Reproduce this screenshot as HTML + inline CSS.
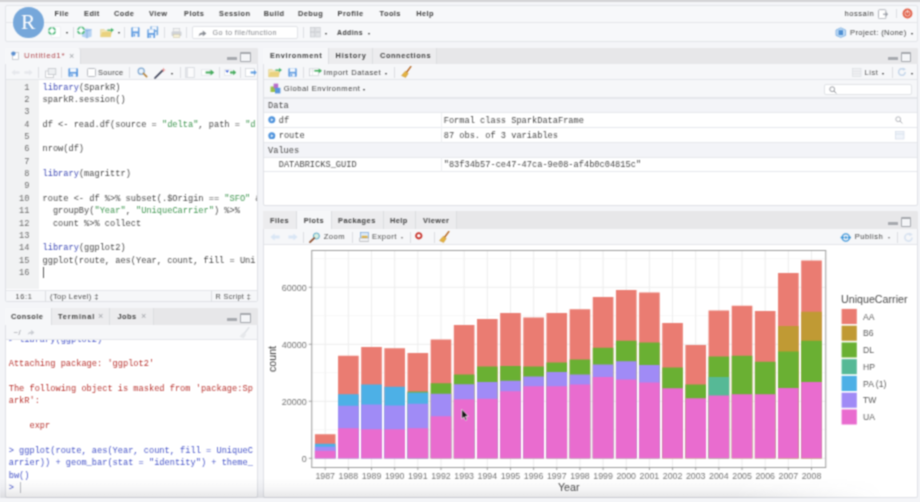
<!DOCTYPE html>
<html lang="en"><head><meta charset="utf-8"><title>RStudio</title>
<style>
html,body{margin:0;padding:0}
body{width:920px;height:502px;overflow:hidden;position:relative;background:#f4f5f8;font-family:"Liberation Sans",sans-serif;font-size:8.4px;color:#3a3a3a}
div,span,svg{position:absolute;box-sizing:border-box}
#app{left:-12px;top:-12px;width:944px;height:526px;background:#f4f5f8;filter:url(#soft)}
#stage{left:12px;top:12px;width:920px;height:502px}
.topstrip{left:-6px;top:-6px;width:932px;height:8.4px;background:#d4d4d6}
.hdr{left:4.5px;top:5px;width:913px;height:36.5px;background:#f7f8fa;border:1px solid #e3e5e9;border-radius:2px}
.hline{left:5px;top:22px;width:912px;height:1px;background:#e5e6ea}
.logo{left:12.8px;top:7.1px;width:30.8px;height:30.8px;border-radius:50%;background:#76a7da}
.logo span{left:0;top:0;width:30.8px;height:30.8px;line-height:30.4px;text-align:center;color:#fff;font-family:"Liberation Serif","DejaVu Serif",serif;font-size:21.5px}
.pane{background:#fff;border:1px solid #dfe1e6;border-radius:2px;overflow:hidden}
.tabbar{background:#e7e7e9}
.tab{background:#ececee;border-right:1px solid #dcdde0}
.tab.on{background:#f6f7f9}
.tbar{background:#f6f7f9;border-bottom:1px solid #e4e6ea;left:0;right:0}
.t{white-space:nowrap;line-height:12px;height:12px;font-size:7.6px;letter-spacing:.5px}
.t span{position:static}
.b{font-weight:bold;font-size:7.4px;letter-spacing:.45px;color:#404040}
.g{color:#4c4c4c}
.m{font-family:"Liberation Mono","DejaVu Sans Mono",monospace;font-size:8.67px;color:#474747;white-space:pre;margin-top:.7px;letter-spacing:0}
.sep{width:1px;height:11px;background:#dcdee2}
.arr{width:0;height:0;border-left:1.8px solid transparent;border-right:1.8px solid transparent;border-top:2.4px solid #333}
.code .kw{color:#3d49b5}
.code .st{color:#3f9650}
.ln{color:#6b6b6b;text-align:right;width:24px}
.red{color:#b8332f}
.blue{color:#4553c8}
.shade{left:0;top:478px;width:920px;height:20px;background:linear-gradient(to bottom,rgba(60,60,70,0) 0%,rgba(60,60,70,0.04) 50%,rgba(60,60,70,0.13) 100%);-webkit-mask-image:linear-gradient(to right,#000 0%,#000 80%,transparent 96%);mask-image:linear-gradient(to right,#000 0%,#000 80%,transparent 96%);pointer-events:none}
.srch{background:#fff;border:1px solid #e1e3e7;border-radius:2px}
.row{left:0;right:0;border-bottom:1px solid #e6e8ec}
.hrow{background:#f3f4f8}

</style></head>
<body>
<svg width="0" height="0" style="position:absolute"><defs><filter id="soft" x="0" y="0" width="100%" height="100%" color-interpolation-filters="sRGB"><feConvolveMatrix order="3" kernelMatrix="0.169 0.411 0.169 0.411 1 0.411 0.169 0.411 0.169" divisor="3.32" edgeMode="duplicate" preserveAlpha="true"/></filter></defs></svg>
<div id="app"><div id="stage">
<div class="topstrip"></div>
<div class="hdr"></div><div class="hline"></div>
<div class="logo"><span>R</span></div>
<span class="t b" style="left:54.5px;top:7.90px;">File</span>
<span class="t b" style="left:84px;top:7.90px;">Edit</span>
<span class="t b" style="left:114px;top:7.90px;">Code</span>
<span class="t b" style="left:149px;top:7.90px;">View</span>
<span class="t b" style="left:184px;top:7.90px;">Plots</span>
<span class="t b" style="left:219px;top:7.90px;">Session</span>
<span class="t b" style="left:263.7px;top:7.90px;">Build</span>
<span class="t b" style="left:298px;top:7.90px;">Debug</span>
<span class="t b" style="left:337.5px;top:7.90px;">Profile</span>
<span class="t b" style="left:379.5px;top:7.90px;">Tools</span>
<span class="t b" style="left:416.2px;top:7.90px;">Help</span>
<span class="t " style="left:844.5px;top:7.80px;">hossain</span>
<svg style="left:877.5px;top:8.6px" width="12" height="10.5" viewBox="0 0 12 10.5"><rect x="0.5" y="0.7" width="7.4" height="9" rx="1" fill="#fff" stroke="#a9adb4" stroke-width="0.9"/><path d="M5 5.2 L9.2 5.2 M7.6 3.4 L9.6 5.2 L7.6 7" stroke="#8a8f98" fill="none"/></svg>
<div class="sep" style="left:896px;top:9.30px;height:9px"></div>
<svg style="left:902px;top:8.3px" width="11" height="11" viewBox="0 0 11 11"><circle cx="5.5" cy="5.5" r="4.9" fill="#e2624b"/><circle cx="5.5" cy="5.5" r="2.6" fill="none" stroke="#f6d3cb" stroke-width="1"/><path d="M5.5 2 L5.5 5.4" stroke="#f6d3cb" stroke-width="1.1"/></svg>
<svg style="left:47px;top:26.0px" width="14" height="12" viewBox="0 0 14 12"><rect x="4.2" y="0.8" width="9" height="10.4" fill="#fff" stroke="#e3e5e9" stroke-width="0.5"/><circle cx="5" cy="4.9" r="3.1" fill="#fff" stroke="#4fb87a" stroke-width="1.5"/><path d="M5 1 V8.8 M1.1 4.9 H8.9" stroke="#fff" stroke-width="1"/></svg>
<div class="arr" style="left:65.50px;top:32.40px;border-top-color:#333"></div>
<div class="sep" style="left:72.5px;top:27.10px;height:11px"></div>
<svg style="left:76px;top:26.0px" width="17" height="13" viewBox="0 0 17 13"><path d="M6 3.4 L11 2.4 L15.6 3.6 L15.6 10.6 L11 12.2 L6 10.6 Z" fill="#a9cbf0" opacity="0.85"/><path d="M11 4.6 L11 12.2 M6 3.4 L11 4.6 L15.6 3.6" stroke="#6c9fdc" stroke-width="0.6" fill="none"/><circle cx="5" cy="4.4" r="3.1" fill="#fff" stroke="#4fb87a" stroke-width="1.5"/><path d="M5 0.5 V8.3 M1.1 4.4 H8.9" stroke="#fff" stroke-width="1"/></svg>
<svg style="left:100px;top:27.1px" width="15" height="11" viewBox="0 0 15 11"><path d="M0.6 2.6 L0.6 9.8 L10.6 9.8 L10.6 3.8 L5.2 3.8 L4.2 2.6 Z" fill="#f3e7b4" stroke="#dcc77c" stroke-width="0.5"/><path d="M0.6 9.8 L2 5 L11.8 5 L10.6 9.8 Z" fill="#ead27e"/><path d="M7.4 2.4 L11 2.4 L11 1 L14 3.1 L11 5.2 L11 3.8 L7.4 3.8 Z" fill="#46b36b"/></svg>
<div class="arr" style="left:117.50px;top:32.40px;border-top-color:#333"></div>
<div class="sep" style="left:124px;top:27.10px;height:11px"></div>
<svg style="left:131.2px;top:27.400000000000002px" width="8.8" height="10.4" viewBox="0 0 10 11.2" preserveAspectRatio="none"><rect x="0.4" y="0.4" width="9.2" height="10.4" rx="0.9" fill="#5f9be0"/><rect x="2" y="0.4" width="6" height="4.4" fill="#f4f8fd"/><rect x="2.4" y="6.8" width="5.2" height="4" fill="#eef4fc"/><rect x="3" y="7.6" width="1.6" height="2.6" fill="#5f9be0"/></svg>
<svg style="left:150px;top:26.44px" width="8.5" height="9.520000000000001" viewBox="0 0 10 11.2" preserveAspectRatio="none"><rect x="0.4" y="0.4" width="9.2" height="10.4" rx="0.9" fill="#7aabde"/><rect x="2" y="0.4" width="6" height="4.4" fill="#f4f8fd"/><rect x="2.4" y="6.8" width="5.2" height="4" fill="#eef4fc"/><rect x="3" y="7.6" width="1.6" height="2.6" fill="#7aabde"/></svg>
<svg style="left:146.5px;top:28.639999999999997px" width="8.5" height="9.520000000000001" viewBox="0 0 10 11.2" preserveAspectRatio="none"><rect x="0.4" y="0.4" width="9.2" height="10.4" rx="0.9" fill="#5f9be0"/><rect x="2" y="0.4" width="6" height="4.4" fill="#f4f8fd"/><rect x="2.4" y="6.8" width="5.2" height="4" fill="#eef4fc"/><rect x="3" y="7.6" width="1.6" height="2.6" fill="#5f9be0"/></svg>
<div class="sep" style="left:164px;top:27.10px;height:11px"></div>
<svg style="left:170.5px;top:27.6px" width="11" height="10" viewBox="0 0 11 10"><rect x="2.2" y="0.6" width="6.6" height="3.4" fill="#f3f3f3" stroke="#c6c8cc" stroke-width="0.6"/><rect x="0.5" y="3.6" width="10" height="4.4" rx="1" fill="#cfd2d7"/><rect x="2.2" y="6.4" width="6.6" height="3" fill="#f7f1d8" stroke="#c9c4a6" stroke-width="0.5"/></svg>
<div class="sep" style="left:186px;top:27.10px;height:11px"></div>
<div class="srch" style="left:192px;top:26px;width:105.5px;height:12.6px"></div>
<svg style="left:198px;top:28.6px" width="9" height="8" viewBox="0 0 9 8"><path d="M0.6 7.4 C1 4.6 2.6 3.6 4.8 3.6 L4.8 1.4 L8.4 4.4 L4.8 7.2 L4.8 5.4 C3 5.4 1.8 5.8 0.6 7.4 Z" fill="#8a8e95"/></svg>
<span class="t " style="left:212.5px;top:26.60px;color:#85878c;font-size:7.2px;letter-spacing:.45px">Go to file/function</span>
<div class="sep" style="left:303px;top:27.10px;height:11px"></div>
<svg style="left:310px;top:27.400000000000002px" width="10.6" height="10.4" viewBox="0 0 10.6 10.4"><rect x="0.4" y="0.4" width="4.4" height="4.4" fill="#e3e5e8" stroke="#c3c6cb" stroke-width="0.6"/><rect x="5.8" y="0.4" width="4.4" height="4.4" fill="#e3e5e8" stroke="#c3c6cb" stroke-width="0.6"/><rect x="0.4" y="5.6" width="4.4" height="4.4" fill="#e3e5e8" stroke="#c3c6cb" stroke-width="0.6"/><rect x="5.8" y="5.6" width="4.4" height="4.4" fill="#e3e5e8" stroke="#c3c6cb" stroke-width="0.6"/></svg>
<div class="arr" style="left:325.20px;top:32.60px;border-top-color:#333"></div>
<span class="t b" style="left:337px;top:26.90px;font-size:6.9px">Addins</span>
<div class="arr" style="left:368.20px;top:32.60px;border-top-color:#333"></div>
<svg style="left:835px;top:27.1px" width="11.5" height="11" viewBox="0 0 11.5 11"><path d="M1 3 L5.8 0.8 L10.6 3 L10.6 8.4 L5.8 10.4 L1 8.4 Z" fill="#bcd9f4" stroke="#6ea5dc" stroke-width="0.7"/><rect x="3.6" y="3.2" width="4.4" height="4.8" fill="#4f8fd3"/></svg>
<span class="t " style="left:850px;top:26.60px;color:#444;letter-spacing:.37px">Project: (None)</span>
<div class="arr" style="left:910.70px;top:32.60px;border-top-color:#333"></div>
<div class="pane" style="left:4.5px;top:47.5px;width:253.3px;height:254.8px"></div>
<div class="tabbar" style="left:4.5px;top:47.5px;width:253.3px;height:16.9px;border-radius:2px 2px 0 0"></div>
<div class="tab on" style="left:4.5px;top:47.5px;width:76px;height:16.9px;border-top-right-radius:3px"></div>
<svg style="left:10.5px;top:51px" width="8" height="9" viewBox="0 0 8 9"><rect x="1.4" y="1.4" width="6" height="7.2" fill="#fff" stroke="#b8bcc3" stroke-width="0.7"/><circle cx="2.4" cy="2.6" r="2.2" fill="#5b8fd0"/></svg>
<span class="t " style="left:24px;top:49.70px;color:#b04a4f;font-size:8px;letter-spacing:.65px">Untitled1*</span>
<span class="t " style="left:69px;top:49.50px;color:#a0a3a8;font-size:9px">×</span>
<div style="left:227px;top:57.10px;width:10px;height:2.7px;background:#a6a9ae;border-radius:.5px"></div>
<div style="left:240px;top:52.30px;width:10.6px;height:9.6px;border:1px solid #a6a9ae;border-top:2.6px solid #a6a9ae;background:#f4f5f7;border-radius:1px"></div>
<div class="tbar" style="left:5.5px;top:64.3px;width:251.3px;height:15.8px"></div>
<svg style="left:11px;top:69.0px" width="9" height="7" viewBox="0 0 9 7"><path d="M0.4 3.5 L4 0.4 L4 2.2 L8.6 2.2 L8.6 4.8 L4 4.8 L4 6.6 Z" fill="#e6e8ec"/></svg>
<svg style="left:24px;top:69.0px" width="9" height="7" viewBox="0 0 9 7"><path d="M8.6 3.5 L5 0.4 L5 2.2 L0.4 2.2 L0.4 4.8 L5 4.8 L5 6.6 Z" fill="#e6e8ec"/></svg>
<div class="sep" style="left:38px;top:67.00px;height:11px"></div>
<svg style="left:45px;top:67.5px" width="11.5" height="10" viewBox="0 0 11.5 10"><rect x="0.6" y="3" width="8" height="6.4" fill="#fff" stroke="#c2c5ca" stroke-width="0.8"/><rect x="3.2" y="0.6" width="7.6" height="6" fill="#eef0f2" stroke="#c2c5ca" stroke-width="0.8"/></svg>
<div class="sep" style="left:61px;top:67.00px;height:11px"></div>
<svg style="left:68.4px;top:67.9px" width="10.4" height="9.2" viewBox="0 0 10 11.2" preserveAspectRatio="none"><rect x="0.4" y="0.4" width="9.2" height="10.4" rx="0.9" fill="#5f9be0"/><rect x="2" y="0.4" width="6" height="4.4" fill="#f4f8fd"/><rect x="2.4" y="6.8" width="5.2" height="4" fill="#eef4fc"/><rect x="3" y="7.6" width="1.6" height="2.6" fill="#5f9be0"/></svg>
<div style="left:87px;top:67.9px;width:8.6px;height:9px;background:#fff;border:1px solid #b9bcc2;border-radius:1.5px"></div>
<span class="t " style="left:98px;top:66.70px;color:#444;font-size:7.4px;letter-spacing:.35px">Source</span>
<div class="sep" style="left:129px;top:67.00px;height:11px"></div>
<svg style="left:137px;top:67.25px" width="10.5" height="10.5" viewBox="0 0 10 10"><circle cx="4" cy="4" r="2.9" fill="#eaf3fb" stroke="#7ea6cf" stroke-width="1.1"/><path d="M6.2 6.2 L9.2 9.2" stroke="#b5823a" stroke-width="1.6" stroke-linecap="round"/></svg>
<svg style="left:153.5px;top:66.5px" width="12.5" height="12" viewBox="0 0 12.5 12"><path d="M1 11 L8.4 3.6" stroke="#3a3f55" stroke-width="1.7" stroke-linecap="round"/><path d="M9.6 0.6 L10.2 2.4 L12 3 L10.2 3.6 L9.6 5.4 L9 3.6 L7.2 3 L9 2.4 Z" fill="#e98d8d"/></svg>
<div class="arr" style="left:170.80px;top:72.70px;border-top-color:#333"></div>
<div class="sep" style="left:180px;top:67.00px;height:11px"></div>
<svg style="left:185px;top:67.0px" width="10" height="11" viewBox="0 0 10 11"><rect x="0.6" y="0.6" width="8.6" height="9.8" fill="#fbfbfc" stroke="#d3d6db" stroke-width="0.8"/><rect x="0.6" y="0.6" width="2.4" height="9.8" fill="#e2e4e8"/></svg>
<svg style="left:201px;top:69.0px" width="13.5" height="7" viewBox="0 0 13.5 7"><rect x="0.4" y="0.8" width="8" height="5.4" fill="#fff" stroke="#d9dce1" stroke-width="0.6"/><path d="M4.6 2.6 L9.6 2.6 L9.6 0.6 L13.2 3.5 L9.6 6.4 L9.6 4.4 L4.6 4.4 Z" fill="#45ab5c"/></svg>
<div class="sep" style="left:219px;top:67.00px;height:11px"></div>
<svg style="left:224px;top:69.0px" width="12.5" height="7" viewBox="0 0 12.5 7"><rect x="0.4" y="0.8" width="7" height="5.4" fill="#fff" stroke="#d9dce1" stroke-width="0.6"/><path d="M1.2 1.4 L5.2 1.4 L3.2 3.8 Z" fill="#2f55d4"/><path d="M6 2.6 L9.2 2.6 L9.2 0.8 L12.2 3.5 L9.2 6.2 L9.2 4.4 L6 4.4 Z" fill="#45ab5c"/></svg>
<div class="sep" style="left:240px;top:67.00px;height:11px"></div>
<svg style="left:245px;top:68.0px" width="12" height="9" viewBox="0 0 12 9"><rect x="0.5" y="0.5" width="9" height="8" fill="#fff" stroke="#d3d6db" stroke-width="0.8"/><path d="M5.6 3.4 L9 3.4 L9 2 L11.8 4.5 L9 7 L9 5.6 L5.6 5.6 Z" fill="#5d9be0"/></svg>
<div style="left:5.5px;top:80.1px;width:33.3px;height:209.4px;background:#f1f2f3"></div>
<div class="code" style="left:5.5px;top:80.1px;width:251.3px;height:209.4px;overflow:hidden">
<span class="t m ln" style="left:0;top:0.80px">1</span>
<span class="t m" style="left:37px;top:0.80px"><span class="kw">library</span>(SparkR)</span>
<span class="t m ln" style="left:0;top:13.16px">2</span>
<span class="t m" style="left:37px;top:13.16px">sparkR.session()</span>
<span class="t m ln" style="left:0;top:25.52px">3</span>
<span class="t m ln" style="left:0;top:37.88px">4</span>
<span class="t m" style="left:37px;top:37.88px">df &lt;- read.df(source = <span class="st">"delta"</span>, path = <span class="st">"d</span></span>
<span class="t m ln" style="left:0;top:50.24px">5</span>
<span class="t m ln" style="left:0;top:62.60px">6</span>
<span class="t m" style="left:37px;top:62.60px">nrow(df)</span>
<span class="t m ln" style="left:0;top:74.96px">7</span>
<span class="t m ln" style="left:0;top:87.32px">8</span>
<span class="t m" style="left:37px;top:87.32px"><span class="kw">library</span>(magrittr)</span>
<span class="t m ln" style="left:0;top:99.68px">9</span>
<span class="t m ln" style="left:0;top:112.04px">10</span>
<span class="t m" style="left:37px;top:112.04px">route &lt;- df %&gt;% subset(.$Origin == <span class="st">"SFO"</span> &amp;</span>
<span class="t m ln" style="left:0;top:124.40px">11</span>
<span class="t m" style="left:37px;top:124.40px">  groupBy(<span class="st">"Year"</span>, <span class="st">"UniqueCarrier"</span>) %&gt;%</span>
<span class="t m ln" style="left:0;top:136.76px">12</span>
<span class="t m" style="left:37px;top:136.76px">  count %&gt;% collect</span>
<span class="t m ln" style="left:0;top:149.12px">13</span>
<span class="t m ln" style="left:0;top:161.48px">14</span>
<span class="t m" style="left:37px;top:161.48px"><span class="kw">library</span>(ggplot2)</span>
<span class="t m ln" style="left:0;top:173.84px">15</span>
<span class="t m" style="left:37px;top:173.84px">ggplot(route, aes(Year, count, fill = Uni</span>
<span class="t m ln" style="left:0;top:186.20px">16</span>
<div style="left:37.4px;top:187.20px;width:1px;height:10.5px;background:#555"></div>
</div>
<div style="left:5.5px;top:289.5px;width:251.3px;height:11.8px;background:#f6f7f9;border-top:1px solid #e4e6ea"></div>
<span class="t g" style="left:15.5px;top:290.90px;font-size:7.4px;letter-spacing:.7px">16:1</span>
<div class="sep" style="left:45px;top:290.50px;height:11px"></div>
<div class="sep" style="left:211px;top:290.50px;height:11px"></div>
<span class="t g" style="left:50px;top:290.90px;font-size:7.6px;letter-spacing:.38px">(Top Level) ‡</span>
<span class="t g" style="left:215.5px;top:290.90px;font-size:7.2px;letter-spacing:.4px">R Script ‡</span>
<div class="pane" style="left:4.5px;top:307.6px;width:253.3px;height:190.9px"></div>
<div class="tabbar" style="left:4.5px;top:307.6px;width:253.3px;height:17px;border-radius:2px 2px 0 0"></div>
<div class="tab on" style="left:4.5px;top:307.6px;width:47px;height:17px"></div>
<div class="tab" style="left:51.5px;top:307.6px;width:58.5px;height:17px"></div>
<div class="tab" style="left:110px;top:307.6px;width:43.5px;height:17px"></div>
<span class="t b" style="left:11px;top:310.60px;">Console</span>
<span class="t b" style="left:58px;top:310.60px;letter-spacing:.85px">Terminal</span>
<span class="t b" style="left:117.5px;top:310.60px;">Jobs</span>
<span class="t " style="left:98px;top:310.40px;color:#a0a3a8;font-size:9px">×</span>
<span class="t " style="left:141px;top:310.40px;color:#a0a3a8;font-size:9px">×</span>
<div style="left:227px;top:318.10px;width:10px;height:2.7px;background:#a6a9ae;border-radius:.5px"></div>
<div style="left:240px;top:313.30px;width:10.6px;height:9.6px;border:1px solid #a6a9ae;border-top:2.6px solid #a6a9ae;background:#f4f5f7;border-radius:1px"></div>
<div class="tbar" style="left:5.5px;top:324.6px;width:251.3px;height:15.6px"></div>
<span class="t g" style="left:13.5px;top:326.60px;color:#8b8e94">~/</span>
<svg style="left:26.5px;top:329px" width="8" height="7" viewBox="0 0 8 7"><path d="M0.6 6 C1 3.6 2.4 2.8 4.2 2.8 L4.2 0.8 L7.4 3.6 L4.2 6.2 L4.2 4.6 C2.6 4.6 1.6 4.8 0.6 6 Z" fill="#c9ccd2"/></svg>
<svg style="left:239px;top:326.5px" width="11" height="12" viewBox="0 0 11 12"><path d="M9.8 0.6 L5.6 6.2" stroke="#dcdfe3" stroke-width="1.4" stroke-linecap="round"/><path d="M4.4 5.2 L7.2 7.4 L4.6 11.4 L0.6 9.6 Z" fill="#e6e8eb"/></svg>
<div style="left:5.5px;top:340.2px;width:251.3px;height:157.3px;overflow:hidden">
<span class="t m blue" style="left:3.2px;top:-7.22px">&gt; library(ggplot2)</span>
<span class="t m red" style="left:3.2px;top:17.50px">Attaching package: 'ggplot2'</span>
<span class="t m red" style="left:3.2px;top:42.22px">The following object is masked from 'package:Sp</span>
<span class="t m red" style="left:3.2px;top:54.58px">arkR':</span>
<span class="t m red" style="left:3.2px;top:79.30px">    expr</span>
<span class="t m blue" style="left:3.2px;top:104.02px">&gt; ggplot(route, aes(Year, count, fill = UniqueC</span>
<span class="t m blue" style="left:3.2px;top:116.38px">arrier)) + geom_bar(stat = "identity") + theme_</span>
<span class="t m blue" style="left:3.2px;top:128.74px">bw()</span>
<span class="t m blue" style="left:3.2px;top:141.10px">&gt; </span>
<div style="left:14.2px;top:141.90px;width:1px;height:10.5px;background:#b8bbc0"></div>
</div>
<div class="pane" style="left:263px;top:47.5px;width:654.6px;height:158.2px"></div>
<div class="tabbar" style="left:263px;top:47.5px;width:654.6px;height:16.9px;border-radius:2px 2px 0 0"></div>
<div class="tab on" style="left:263px;top:47.5px;width:66px;height:16.9px"></div>
<div class="tab" style="left:329px;top:47.5px;width:43.6px;height:16.9px"></div>
<div class="tab" style="left:372.6px;top:47.5px;width:64.6px;height:16.9px"></div>
<span class="t b" style="left:270px;top:49.60px;letter-spacing:.65px">Environment</span>
<span class="t b" style="left:335.5px;top:49.60px;letter-spacing:.8px">History</span>
<span class="t b" style="left:380px;top:49.60px;letter-spacing:.58px">Connections</span>
<div style="left:887.5px;top:57.10px;width:10px;height:2.7px;background:#a6a9ae;border-radius:.5px"></div>
<div style="left:900.5px;top:52.30px;width:10.6px;height:9.6px;border:1px solid #a6a9ae;border-top:2.6px solid #a6a9ae;background:#f4f5f7;border-radius:1px"></div>
<div class="tbar" style="left:264px;top:64.3px;width:652.6px;height:15.8px"></div>
<svg style="left:268px;top:66.9px" width="15" height="11" viewBox="0 0 15 11"><path d="M0.6 2.6 L0.6 9.8 L10.6 9.8 L10.6 3.8 L5.2 3.8 L4.2 2.6 Z" fill="#f3e7b4" stroke="#dcc77c" stroke-width="0.5"/><path d="M0.6 9.8 L2 5 L11.8 5 L10.6 9.8 Z" fill="#ead27e"/><path d="M7.4 2.4 L11 2.4 L11 1 L14 3.1 L11 5.2 L11 3.8 L7.4 3.8 Z" fill="#46b36b"/></svg>
<svg style="left:287.7px;top:67.9px" width="9.1" height="9" viewBox="0 0 10 11.2" preserveAspectRatio="none"><rect x="0.4" y="0.4" width="9.2" height="10.4" rx="0.9" fill="#5f9be0"/><rect x="2" y="0.4" width="6" height="4.4" fill="#f4f8fd"/><rect x="2.4" y="6.8" width="5.2" height="4" fill="#eef4fc"/><rect x="3" y="7.6" width="1.6" height="2.6" fill="#5f9be0"/></svg>
<div class="sep" style="left:303px;top:66.90px;height:11px"></div>
<svg style="left:309px;top:68.4px" width="13.5" height="8.5" viewBox="0 0 13.5 8.5"><rect x="0.5" y="0.8" width="9" height="7" fill="#fff" stroke="#c9ccd2" stroke-width="0.7"/><path d="M0.5 3 H9.5 M3.6 0.8 V7.8" stroke="#d5d8dd" stroke-width="0.5"/><path d="M5.4 2 L9.8 2 L9.8 0.4 L13 2.8 L9.8 5.2 L9.8 3.6 L5.4 3.6 Z" fill="#3fae5a"/></svg>
<span class="t " style="left:323.7px;top:66.60px;color:#3e3e3e;letter-spacing:.55px">Import Dataset</span>
<div class="arr" style="left:385.20px;top:72.60px;border-top-color:#333"></div>
<div class="sep" style="left:394px;top:66.90px;height:11px"></div>
<svg style="left:400.5px;top:66.4px" width="11" height="12" viewBox="0 0 11 12"><path d="M9.8 0.6 L5.6 6.2" stroke="#b5651d" stroke-width="1.5" stroke-linecap="round"/><path d="M4.4 5.2 L7.2 7.4 L4.6 11.4 L0.6 9.6 Z" fill="#e3b341" stroke="#c58a2a" stroke-width="0.5"/></svg>
<svg style="left:852px;top:67.9px" width="9.5" height="9" viewBox="0 0 9.5 9"><rect x="0.5" y="0.5" width="8.5" height="8" fill="#f0f1f3" stroke="#d8dadf" stroke-width="0.6"/><path d="M0.5 3.2 H9 M0.5 5.9 H9" stroke="#d8dadf" stroke-width="0.6"/></svg>
<span class="t " style="left:864.5px;top:66.60px;color:#555">List</span>
<div class="arr" style="left:882.20px;top:72.60px;border-top-color:#333"></div>
<div class="sep" style="left:892px;top:66.90px;height:11px"></div>
<svg style="left:897px;top:67.4px" width="10" height="10" viewBox="0 0 10 10"><path d="M8.2 5 A3.3 3.3 0 1 1 6.8 2.3" fill="none" stroke="#c5d6ea" stroke-width="1.5"/><path d="M5.8 0.4 L9 2.2 L6 3.8 Z" fill="#c5d6ea"/></svg>
<div class="arr" style="left:910.70px;top:72.60px;border-top-color:#333"></div>
<div class="tbar" style="left:264px;top:80.1px;width:652.6px;height:17.6px"></div>
<svg style="left:269.5px;top:83.0px" width="11" height="11" viewBox="0 0 11 11"><rect x="0.5" y="3.5" width="5" height="5.5" fill="#9bc24a"/><rect x="3.6" y="0.6" width="4.6" height="5" fill="#b86fc9"/><rect x="5" y="4.8" width="5.4" height="5.6" fill="#5a97dc"/></svg>
<span class="t " style="left:283.7px;top:82.50px;color:#3e3e3e;letter-spacing:.56px">Global Environment</span>
<div class="arr" style="left:363.20px;top:88.70px;border-top-color:#333"></div>
<div class="srch" style="left:823.7px;top:83.6px;width:88.6px;height:11.8px"></div>
<svg style="left:828.5px;top:85.6px" width="8" height="8" viewBox="0 0 8 8"><circle cx="3.2" cy="3.2" r="2.4" fill="none" stroke="#8d9096" stroke-width="0.9"/><path d="M5 5 L7.4 7.4" stroke="#8d9096" stroke-width="1"/></svg>
<div class="row hrow" style="left:264px;top:98.2px;width:652.6px;height:14.4px;border-top:1px solid #e6e8ec"></div>
<span class="t m" style="left:268px;top:99.30px;">Data</span>
<div class="row" style="left:264px;top:112.6px;width:652.6px;height:15.7px"></div>
<div class="row" style="left:264px;top:128.2px;width:652.6px;height:15px"></div>
<div class="row hrow" style="left:264px;top:143.2px;width:652.6px;height:14.4px"></div>
<span class="t m" style="left:268px;top:144.40px;">Values</span>
<div class="row" style="left:264px;top:157.4px;width:652.6px;height:14.8px"></div>
<div style="left:440.5px;top:112.6px;width:1px;height:30.6px;background:#eceef1"></div>
<div style="left:440.5px;top:157.4px;width:1px;height:14.4px;background:#eceef1"></div>
<svg style="left:268px;top:116.4px" width="7.6" height="7.6" viewBox="0 0 7.6 7.6"><circle cx="3.8" cy="3.8" r="3.5" fill="#4f93dc"/><path d="M2.8 2.2 L5.6 3.8 L2.8 5.4 Z" fill="#e8f2fc"/></svg>
<svg style="left:268px;top:131.5px" width="7.6" height="7.6" viewBox="0 0 7.6 7.6"><circle cx="3.8" cy="3.8" r="3.5" fill="#4f93dc"/><path d="M2.8 2.2 L5.6 3.8 L2.8 5.4 Z" fill="#e8f2fc"/></svg>
<span class="t m" style="left:278.7px;top:114.00px;">df</span>
<span class="t m" style="left:278.7px;top:129.20px;">route</span>
<span class="t m" style="left:278.7px;top:158.80px;">DATABRICKS_GUID</span>
<span class="t m" style="left:443.7px;top:114.00px;">Formal class SparkDataFrame</span>
<span class="t m" style="left:443.7px;top:129.20px;">87 obs. of 3 variables</span>
<span class="t m" style="left:443.7px;top:158.80px;">"83f34b57-ce47-47ca-9e08-af4b0c04815c"</span>
<svg style="left:895px;top:116.2px" width="9" height="9" viewBox="0 0 9 9"><circle cx="3.2" cy="3.2" r="2.4" fill="none" stroke="#a9acb2" stroke-width="0.9"/><path d="M5 5 L7.4 7.4" stroke="#a9acb2" stroke-width="1"/></svg>
<svg style="left:895px;top:131.2px" width="10.5" height="9" viewBox="0 0 10.5 9"><rect x="0.5" y="0.5" width="8.5" height="7.5" fill="#f0f4fa" stroke="#cfd8e6" stroke-width="0.6"/><path d="M0.5 3 H9" stroke="#cfd8e6" stroke-width="0.6"/></svg>
<div class="pane" style="left:263px;top:211.4px;width:654.6px;height:287.1px"></div>
<div class="tabbar" style="left:263px;top:211.4px;width:654.6px;height:17.4px;border-radius:2px 2px 0 0"></div>
<div class="tab" style="left:263px;top:211.4px;width:33.5px;height:17.4px"></div>
<div class="tab on" style="left:296.5px;top:211.4px;width:35px;height:17.4px"></div>
<div class="tab" style="left:331.5px;top:211.4px;width:52.4px;height:17.4px"></div>
<div class="tab" style="left:383.9px;top:211.4px;width:32.5px;height:17.4px"></div>
<div class="tab" style="left:416.4px;top:211.4px;width:40.8px;height:17.4px"></div>
<span class="t b" style="left:270px;top:214.60px;">Files</span>
<span class="t b" style="left:303.7px;top:214.60px;">Plots</span>
<span class="t b" style="left:338px;top:214.60px;">Packages</span>
<span class="t b" style="left:390px;top:214.60px;">Help</span>
<span class="t b" style="left:423px;top:214.60px;">Viewer</span>
<div style="left:887.8px;top:222.10px;width:10px;height:2.7px;background:#a6a9ae;border-radius:.5px"></div>
<div style="left:900.8px;top:217.30px;width:10.6px;height:9.6px;border:1px solid #a6a9ae;border-top:2.6px solid #a6a9ae;background:#f4f5f7;border-radius:1px"></div>
<div class="tbar" style="left:264px;top:228.8px;width:652.6px;height:16.6px"></div>
<svg style="left:270px;top:233px" width="10" height="8" viewBox="0 0 10 8"><path d="M0.4 4 L4.6 0.4 L4.6 2.4 L9.6 2.4 L9.6 5.6 L4.6 5.6 L4.6 7.6 Z" fill="#d9e6f5"/></svg>
<svg style="left:287.5px;top:233px" width="10" height="8" viewBox="0 0 10 8"><path d="M9.6 4 L5.4 0.4 L5.4 2.4 L0.4 2.4 L0.4 5.6 L5.4 5.6 L5.4 7.6 Z" fill="#d9e6f5"/></svg>
<div class="sep" style="left:302.5px;top:231.50px;height:11px"></div>
<svg style="left:308.5px;top:231.5px" width="11.5" height="11" viewBox="0 0 11.5 11"><circle cx="7.4" cy="4" r="3" fill="#d8efe0" stroke="#5aa7c9" stroke-width="1"/><path d="M5.2 6.2 L1 10.2" stroke="#8a4b2a" stroke-width="1.7" stroke-linecap="round"/></svg>
<span class="t g" style="left:323.7px;top:231.20px;">Zoom</span>
<div class="sep" style="left:352px;top:231.50px;height:11px"></div>
<svg style="left:358.5px;top:232px" width="10.5" height="10" viewBox="0 0 10.5 10"><rect x="1.6" y="0.6" width="8" height="6.4" fill="#dbe9f8" stroke="#7aa4d4" stroke-width="0.7"/><rect x="2.6" y="3.8" width="6" height="2.4" fill="#e3b341"/><rect x="0.4" y="6" width="9.6" height="3.4" rx="0.6" fill="#f2f3f5" stroke="#9a9da3" stroke-width="0.6"/></svg>
<span class="t g" style="left:372px;top:231.20px;">Export</span>
<div class="arr" style="left:400.70px;top:237.20px;border-top-color:#777"></div>
<div class="sep" style="left:409.5px;top:231.50px;height:11px"></div>
<svg style="left:415.2px;top:232.1px" width="7.6" height="7.6" viewBox="0 0 7.6 7.6"><circle cx="3.8" cy="3.8" r="2.7" fill="#fff" stroke="#c8322b" stroke-width="1.8"/></svg>
<div class="sep" style="left:433.7px;top:231.50px;height:11px"></div>
<svg style="left:438.5px;top:231px" width="11" height="12" viewBox="0 0 11 12"><path d="M9.8 0.6 L5.6 6.2" stroke="#b5651d" stroke-width="1.5" stroke-linecap="round"/><path d="M4.4 5.2 L7.2 7.4 L4.6 11.4 L0.6 9.6 Z" fill="#e3b341" stroke="#c58a2a" stroke-width="0.5"/></svg>
<svg style="left:840px;top:231.5px" width="11.5" height="11" viewBox="0 0 11.5 11"><circle cx="5.8" cy="5.5" r="3.6" fill="none" stroke="#3f96d9" stroke-width="1.4"/><path d="M0.6 5.5 H4 M7.6 5.5 H11" stroke="#3f96d9" stroke-width="1.3"/><circle cx="5.8" cy="5.5" r="1.3" fill="#3f96d9"/></svg>
<span class="t " style="left:854.8px;top:231.20px;color:#444">Publish</span>
<div class="arr" style="left:888.20px;top:237.20px;border-top-color:#777"></div>
<div class="sep" style="left:897.4px;top:231.50px;height:11px"></div>
<svg style="left:902.5px;top:231.5px" width="11" height="11" viewBox="0 0 11 11"><path d="M9 5.5 A3.6 3.6 0 1 1 7.4 2.5" fill="none" stroke="#d7e2f0" stroke-width="1.6"/><path d="M6.4 0.4 L9.8 2.4 L6.6 4.2 Z" fill="#d7e2f0"/></svg>
<svg class="chart" width="920" height="502" viewBox="0 0 920 502" font-family="Liberation Sans, sans-serif">
<rect x="311.75" y="250.5" width="514.0" height="217.0" fill="#fff"/>
<line x1="311.75" x2="825.75" y1="429.75" y2="429.75" stroke="#f3f3f3" stroke-width="0.6"/>
<line x1="311.75" x2="825.75" y1="372.75" y2="372.75" stroke="#f3f3f3" stroke-width="0.6"/>
<line x1="311.75" x2="825.75" y1="315.75" y2="315.75" stroke="#f3f3f3" stroke-width="0.6"/>
<line x1="311.75" x2="825.75" y1="258.75" y2="258.75" stroke="#f3f3f3" stroke-width="0.6"/>
<line x1="311.75" x2="825.75" y1="458.25" y2="458.25" stroke="#ededed" stroke-width="1"/>
<line x1="311.75" x2="825.75" y1="401.25" y2="401.25" stroke="#ededed" stroke-width="1"/>
<line x1="311.75" x2="825.75" y1="344.25" y2="344.25" stroke="#ededed" stroke-width="1"/>
<line x1="311.75" x2="825.75" y1="287.25" y2="287.25" stroke="#ededed" stroke-width="1"/>
<line x1="325.20" x2="325.20" y1="250.5" y2="467.5" stroke="#ededed" stroke-width="1"/>
<line x1="348.36" x2="348.36" y1="250.5" y2="467.5" stroke="#ededed" stroke-width="1"/>
<line x1="371.51" x2="371.51" y1="250.5" y2="467.5" stroke="#ededed" stroke-width="1"/>
<line x1="394.67" x2="394.67" y1="250.5" y2="467.5" stroke="#ededed" stroke-width="1"/>
<line x1="417.83" x2="417.83" y1="250.5" y2="467.5" stroke="#ededed" stroke-width="1"/>
<line x1="440.99" x2="440.99" y1="250.5" y2="467.5" stroke="#ededed" stroke-width="1"/>
<line x1="464.14" x2="464.14" y1="250.5" y2="467.5" stroke="#ededed" stroke-width="1"/>
<line x1="487.30" x2="487.30" y1="250.5" y2="467.5" stroke="#ededed" stroke-width="1"/>
<line x1="510.46" x2="510.46" y1="250.5" y2="467.5" stroke="#ededed" stroke-width="1"/>
<line x1="533.61" x2="533.61" y1="250.5" y2="467.5" stroke="#ededed" stroke-width="1"/>
<line x1="556.77" x2="556.77" y1="250.5" y2="467.5" stroke="#ededed" stroke-width="1"/>
<line x1="579.93" x2="579.93" y1="250.5" y2="467.5" stroke="#ededed" stroke-width="1"/>
<line x1="603.08" x2="603.08" y1="250.5" y2="467.5" stroke="#ededed" stroke-width="1"/>
<line x1="626.24" x2="626.24" y1="250.5" y2="467.5" stroke="#ededed" stroke-width="1"/>
<line x1="649.40" x2="649.40" y1="250.5" y2="467.5" stroke="#ededed" stroke-width="1"/>
<line x1="672.56" x2="672.56" y1="250.5" y2="467.5" stroke="#ededed" stroke-width="1"/>
<line x1="695.71" x2="695.71" y1="250.5" y2="467.5" stroke="#ededed" stroke-width="1"/>
<line x1="718.87" x2="718.87" y1="250.5" y2="467.5" stroke="#ededed" stroke-width="1"/>
<line x1="742.03" x2="742.03" y1="250.5" y2="467.5" stroke="#ededed" stroke-width="1"/>
<line x1="765.18" x2="765.18" y1="250.5" y2="467.5" stroke="#ededed" stroke-width="1"/>
<line x1="788.34" x2="788.34" y1="250.5" y2="467.5" stroke="#ededed" stroke-width="1"/>
<line x1="811.50" x2="811.50" y1="250.5" y2="467.5" stroke="#ededed" stroke-width="1"/>
<rect x="314.90" y="434.25" width="20.6" height="24.00" fill="#ea7c72"/>
<rect x="314.90" y="443.75" width="20.6" height="14.50" fill="#4db0e6"/>
<rect x="314.90" y="446.75" width="20.6" height="11.50" fill="#a08bf6"/>
<rect x="314.90" y="450.75" width="20.6" height="7.50" fill="#e96ccf"/>
<rect x="338.06" y="355.75" width="20.6" height="102.50" fill="#ea7c72"/>
<rect x="338.06" y="394.25" width="20.6" height="64.00" fill="#4db0e6"/>
<rect x="338.06" y="405.75" width="20.6" height="52.50" fill="#a08bf6"/>
<rect x="338.06" y="428.25" width="20.6" height="30.00" fill="#e96ccf"/>
<rect x="361.21" y="347.00" width="20.6" height="111.25" fill="#ea7c72"/>
<rect x="361.21" y="384.50" width="20.6" height="73.75" fill="#4db0e6"/>
<rect x="361.21" y="404.50" width="20.6" height="53.75" fill="#a08bf6"/>
<rect x="361.21" y="429.25" width="20.6" height="29.00" fill="#e96ccf"/>
<rect x="384.37" y="348.25" width="20.6" height="110.00" fill="#ea7c72"/>
<rect x="384.37" y="386.75" width="20.6" height="71.50" fill="#4db0e6"/>
<rect x="384.37" y="405.50" width="20.6" height="52.75" fill="#a08bf6"/>
<rect x="384.37" y="429.25" width="20.6" height="29.00" fill="#e96ccf"/>
<rect x="407.53" y="353.00" width="20.6" height="105.25" fill="#ea7c72"/>
<rect x="407.53" y="391.50" width="20.6" height="66.75" fill="#6ab033"/>
<rect x="407.53" y="392.50" width="20.6" height="65.75" fill="#4db0e6"/>
<rect x="407.53" y="403.75" width="20.6" height="54.50" fill="#a08bf6"/>
<rect x="407.53" y="428.25" width="20.6" height="30.00" fill="#e96ccf"/>
<rect x="430.69" y="339.50" width="20.6" height="118.75" fill="#ea7c72"/>
<rect x="430.69" y="383.25" width="20.6" height="75.00" fill="#6ab033"/>
<rect x="430.69" y="393.75" width="20.6" height="64.50" fill="#a08bf6"/>
<rect x="430.69" y="416.25" width="20.6" height="42.00" fill="#e96ccf"/>
<rect x="453.84" y="325.00" width="20.6" height="133.25" fill="#ea7c72"/>
<rect x="453.84" y="374.50" width="20.6" height="83.75" fill="#6ab033"/>
<rect x="453.84" y="384.25" width="20.6" height="74.00" fill="#a08bf6"/>
<rect x="453.84" y="399.25" width="20.6" height="59.00" fill="#e96ccf"/>
<rect x="477.00" y="319.00" width="20.6" height="139.25" fill="#ea7c72"/>
<rect x="477.00" y="366.50" width="20.6" height="91.75" fill="#6ab033"/>
<rect x="477.00" y="382.00" width="20.6" height="76.25" fill="#a08bf6"/>
<rect x="477.00" y="398.75" width="20.6" height="59.50" fill="#e96ccf"/>
<rect x="500.16" y="313.00" width="20.6" height="145.25" fill="#ea7c72"/>
<rect x="500.16" y="366.00" width="20.6" height="92.25" fill="#6ab033"/>
<rect x="500.16" y="380.75" width="20.6" height="77.50" fill="#a08bf6"/>
<rect x="500.16" y="391.25" width="20.6" height="67.00" fill="#e96ccf"/>
<rect x="523.31" y="317.50" width="20.6" height="140.75" fill="#ea7c72"/>
<rect x="523.31" y="366.50" width="20.6" height="91.75" fill="#6ab033"/>
<rect x="523.31" y="376.50" width="20.6" height="81.75" fill="#a08bf6"/>
<rect x="523.31" y="386.25" width="20.6" height="72.00" fill="#e96ccf"/>
<rect x="546.47" y="313.00" width="20.6" height="145.25" fill="#ea7c72"/>
<rect x="546.47" y="362.50" width="20.6" height="95.75" fill="#6ab033"/>
<rect x="546.47" y="372.00" width="20.6" height="86.25" fill="#a08bf6"/>
<rect x="546.47" y="386.25" width="20.6" height="72.00" fill="#e96ccf"/>
<rect x="569.63" y="309.25" width="20.6" height="149.00" fill="#ea7c72"/>
<rect x="569.63" y="359.50" width="20.6" height="98.75" fill="#6ab033"/>
<rect x="569.63" y="374.50" width="20.6" height="83.75" fill="#a08bf6"/>
<rect x="569.63" y="384.50" width="20.6" height="73.75" fill="#e96ccf"/>
<rect x="592.78" y="297.00" width="20.6" height="161.25" fill="#ea7c72"/>
<rect x="592.78" y="347.75" width="20.6" height="110.50" fill="#6ab033"/>
<rect x="592.78" y="364.50" width="20.6" height="93.75" fill="#a08bf6"/>
<rect x="592.78" y="377.00" width="20.6" height="81.25" fill="#e96ccf"/>
<rect x="615.94" y="290.00" width="20.6" height="168.25" fill="#ea7c72"/>
<rect x="615.94" y="340.75" width="20.6" height="117.50" fill="#6ab033"/>
<rect x="615.94" y="361.25" width="20.6" height="97.00" fill="#a08bf6"/>
<rect x="615.94" y="379.50" width="20.6" height="78.75" fill="#e96ccf"/>
<rect x="639.10" y="292.50" width="20.6" height="165.75" fill="#ea7c72"/>
<rect x="639.10" y="342.50" width="20.6" height="115.75" fill="#6ab033"/>
<rect x="639.10" y="365.00" width="20.6" height="93.25" fill="#a08bf6"/>
<rect x="639.10" y="382.50" width="20.6" height="75.75" fill="#e96ccf"/>
<rect x="662.26" y="323.00" width="20.6" height="135.25" fill="#ea7c72"/>
<rect x="662.26" y="367.50" width="20.6" height="90.75" fill="#6ab033"/>
<rect x="662.26" y="388.25" width="20.6" height="70.00" fill="#e96ccf"/>
<rect x="685.41" y="345.00" width="20.6" height="113.25" fill="#ea7c72"/>
<rect x="685.41" y="384.50" width="20.6" height="73.75" fill="#6ab033"/>
<rect x="685.41" y="398.25" width="20.6" height="60.00" fill="#e96ccf"/>
<rect x="708.57" y="310.50" width="20.6" height="147.75" fill="#ea7c72"/>
<rect x="708.57" y="356.50" width="20.6" height="101.75" fill="#6ab033"/>
<rect x="708.57" y="377.00" width="20.6" height="81.25" fill="#56b996"/>
<rect x="708.57" y="395.50" width="20.6" height="62.75" fill="#e96ccf"/>
<rect x="731.73" y="305.75" width="20.6" height="152.50" fill="#ea7c72"/>
<rect x="731.73" y="355.75" width="20.6" height="102.50" fill="#6ab033"/>
<rect x="731.73" y="394.25" width="20.6" height="64.00" fill="#e96ccf"/>
<rect x="754.88" y="311.00" width="20.6" height="147.25" fill="#ea7c72"/>
<rect x="754.88" y="361.75" width="20.6" height="96.50" fill="#6ab033"/>
<rect x="754.88" y="394.25" width="20.6" height="64.00" fill="#e96ccf"/>
<rect x="778.04" y="273.00" width="20.6" height="185.25" fill="#ea7c72"/>
<rect x="778.04" y="326.00" width="20.6" height="132.25" fill="#c09a34"/>
<rect x="778.04" y="351.50" width="20.6" height="106.75" fill="#6ab033"/>
<rect x="778.04" y="388.00" width="20.6" height="70.25" fill="#e96ccf"/>
<rect x="801.20" y="260.50" width="20.6" height="197.75" fill="#ea7c72"/>
<rect x="801.20" y="311.75" width="20.6" height="146.50" fill="#c09a34"/>
<rect x="801.20" y="340.75" width="20.6" height="117.50" fill="#6ab033"/>
<rect x="801.20" y="382.00" width="20.6" height="76.25" fill="#e96ccf"/>
<rect x="311.75" y="250.5" width="514.0" height="217.0" fill="none" stroke="#9c9c9c" stroke-width="1"/>
<line x1="325.20" x2="325.20" y1="467.5" y2="470.1" stroke="#8a8a8a" stroke-width="0.8"/>
<text x="325.20" y="479.3" font-size="8.8" fill="#737373" text-anchor="middle">1987</text>
<line x1="348.36" x2="348.36" y1="467.5" y2="470.1" stroke="#8a8a8a" stroke-width="0.8"/>
<text x="348.36" y="479.3" font-size="8.8" fill="#737373" text-anchor="middle">1988</text>
<line x1="371.51" x2="371.51" y1="467.5" y2="470.1" stroke="#8a8a8a" stroke-width="0.8"/>
<text x="371.51" y="479.3" font-size="8.8" fill="#737373" text-anchor="middle">1989</text>
<line x1="394.67" x2="394.67" y1="467.5" y2="470.1" stroke="#8a8a8a" stroke-width="0.8"/>
<text x="394.67" y="479.3" font-size="8.8" fill="#737373" text-anchor="middle">1990</text>
<line x1="417.83" x2="417.83" y1="467.5" y2="470.1" stroke="#8a8a8a" stroke-width="0.8"/>
<text x="417.83" y="479.3" font-size="8.8" fill="#737373" text-anchor="middle">1991</text>
<line x1="440.99" x2="440.99" y1="467.5" y2="470.1" stroke="#8a8a8a" stroke-width="0.8"/>
<text x="440.99" y="479.3" font-size="8.8" fill="#737373" text-anchor="middle">1992</text>
<line x1="464.14" x2="464.14" y1="467.5" y2="470.1" stroke="#8a8a8a" stroke-width="0.8"/>
<text x="464.14" y="479.3" font-size="8.8" fill="#737373" text-anchor="middle">1993</text>
<line x1="487.30" x2="487.30" y1="467.5" y2="470.1" stroke="#8a8a8a" stroke-width="0.8"/>
<text x="487.30" y="479.3" font-size="8.8" fill="#737373" text-anchor="middle">1994</text>
<line x1="510.46" x2="510.46" y1="467.5" y2="470.1" stroke="#8a8a8a" stroke-width="0.8"/>
<text x="510.46" y="479.3" font-size="8.8" fill="#737373" text-anchor="middle">1995</text>
<line x1="533.61" x2="533.61" y1="467.5" y2="470.1" stroke="#8a8a8a" stroke-width="0.8"/>
<text x="533.61" y="479.3" font-size="8.8" fill="#737373" text-anchor="middle">1996</text>
<line x1="556.77" x2="556.77" y1="467.5" y2="470.1" stroke="#8a8a8a" stroke-width="0.8"/>
<text x="556.77" y="479.3" font-size="8.8" fill="#737373" text-anchor="middle">1997</text>
<line x1="579.93" x2="579.93" y1="467.5" y2="470.1" stroke="#8a8a8a" stroke-width="0.8"/>
<text x="579.93" y="479.3" font-size="8.8" fill="#737373" text-anchor="middle">1998</text>
<line x1="603.08" x2="603.08" y1="467.5" y2="470.1" stroke="#8a8a8a" stroke-width="0.8"/>
<text x="603.08" y="479.3" font-size="8.8" fill="#737373" text-anchor="middle">1999</text>
<line x1="626.24" x2="626.24" y1="467.5" y2="470.1" stroke="#8a8a8a" stroke-width="0.8"/>
<text x="626.24" y="479.3" font-size="8.8" fill="#737373" text-anchor="middle">2000</text>
<line x1="649.40" x2="649.40" y1="467.5" y2="470.1" stroke="#8a8a8a" stroke-width="0.8"/>
<text x="649.40" y="479.3" font-size="8.8" fill="#737373" text-anchor="middle">2001</text>
<line x1="672.56" x2="672.56" y1="467.5" y2="470.1" stroke="#8a8a8a" stroke-width="0.8"/>
<text x="672.56" y="479.3" font-size="8.8" fill="#737373" text-anchor="middle">2002</text>
<line x1="695.71" x2="695.71" y1="467.5" y2="470.1" stroke="#8a8a8a" stroke-width="0.8"/>
<text x="695.71" y="479.3" font-size="8.8" fill="#737373" text-anchor="middle">2003</text>
<line x1="718.87" x2="718.87" y1="467.5" y2="470.1" stroke="#8a8a8a" stroke-width="0.8"/>
<text x="718.87" y="479.3" font-size="8.8" fill="#737373" text-anchor="middle">2004</text>
<line x1="742.03" x2="742.03" y1="467.5" y2="470.1" stroke="#8a8a8a" stroke-width="0.8"/>
<text x="742.03" y="479.3" font-size="8.8" fill="#737373" text-anchor="middle">2005</text>
<line x1="765.18" x2="765.18" y1="467.5" y2="470.1" stroke="#8a8a8a" stroke-width="0.8"/>
<text x="765.18" y="479.3" font-size="8.8" fill="#737373" text-anchor="middle">2006</text>
<line x1="788.34" x2="788.34" y1="467.5" y2="470.1" stroke="#8a8a8a" stroke-width="0.8"/>
<text x="788.34" y="479.3" font-size="8.8" fill="#737373" text-anchor="middle">2007</text>
<line x1="811.50" x2="811.50" y1="467.5" y2="470.1" stroke="#8a8a8a" stroke-width="0.8"/>
<text x="811.50" y="479.3" font-size="8.8" fill="#737373" text-anchor="middle">2008</text>
<line x1="308.75" x2="311.75" y1="458.25" y2="458.25" stroke="#8a8a8a" stroke-width="0.8"/>
<text x="306.85" y="462.15" font-size="9" fill="#737373" text-anchor="end">0</text>
<line x1="308.75" x2="311.75" y1="401.25" y2="401.25" stroke="#8a8a8a" stroke-width="0.8"/>
<text x="306.85" y="405.15" font-size="9" fill="#737373" text-anchor="end">20000</text>
<line x1="308.75" x2="311.75" y1="344.25" y2="344.25" stroke="#8a8a8a" stroke-width="0.8"/>
<text x="306.85" y="348.15" font-size="9" fill="#737373" text-anchor="end">40000</text>
<line x1="308.75" x2="311.75" y1="287.25" y2="287.25" stroke="#8a8a8a" stroke-width="0.8"/>
<text x="306.85" y="291.15" font-size="9" fill="#737373" text-anchor="end">60000</text>
<text x="568.75" y="491.2" font-size="10.7" fill="#484848" text-anchor="middle">Year</text>
<text transform="translate(276,359) rotate(-90)" font-size="10.7" fill="#3a3a3a" text-anchor="middle">count</text>
<text x="841" y="302.6" font-size="10.7" fill="#4a4a4a">UniqueCarrier</text>
<rect x="841.6" y="308.90" width="15.2" height="15.1" fill="#ea7c72"/>
<text x="863.1" y="319.50" font-size="8.6" fill="#5a5a5a">AA</text>
<rect x="841.6" y="325.65" width="15.2" height="15.1" fill="#c09a34"/>
<text x="863.1" y="336.25" font-size="8.6" fill="#5a5a5a">B6</text>
<rect x="841.6" y="342.40" width="15.2" height="15.1" fill="#6ab033"/>
<text x="863.1" y="353.00" font-size="8.6" fill="#5a5a5a">DL</text>
<rect x="841.6" y="359.15" width="15.2" height="15.1" fill="#56b996"/>
<text x="863.1" y="369.75" font-size="8.6" fill="#5a5a5a">HP</text>
<rect x="841.6" y="375.90" width="15.2" height="15.1" fill="#4db0e6"/>
<text x="863.1" y="386.50" font-size="8.6" fill="#5a5a5a">PA (1)</text>
<rect x="841.6" y="392.65" width="15.2" height="15.1" fill="#a08bf6"/>
<text x="863.1" y="403.25" font-size="8.6" fill="#5a5a5a">TW</text>
<rect x="841.6" y="409.40" width="15.2" height="15.1" fill="#e96ccf"/>
<text x="863.1" y="420.00" font-size="8.6" fill="#5a5a5a">UA</text>
<g transform="translate(461.8,409.3) scale(0.6)"><path d="M0 0 L0 16 L3.6 12.6 L6.2 18.5 L8.6 17.4 L6 11.6 L11 11.6 Z" fill="#111" stroke="#fff" stroke-width="1.2" stroke-linejoin="round"/></g>
</svg>
<div class="shade"></div>
</div></div>
</body></html>
